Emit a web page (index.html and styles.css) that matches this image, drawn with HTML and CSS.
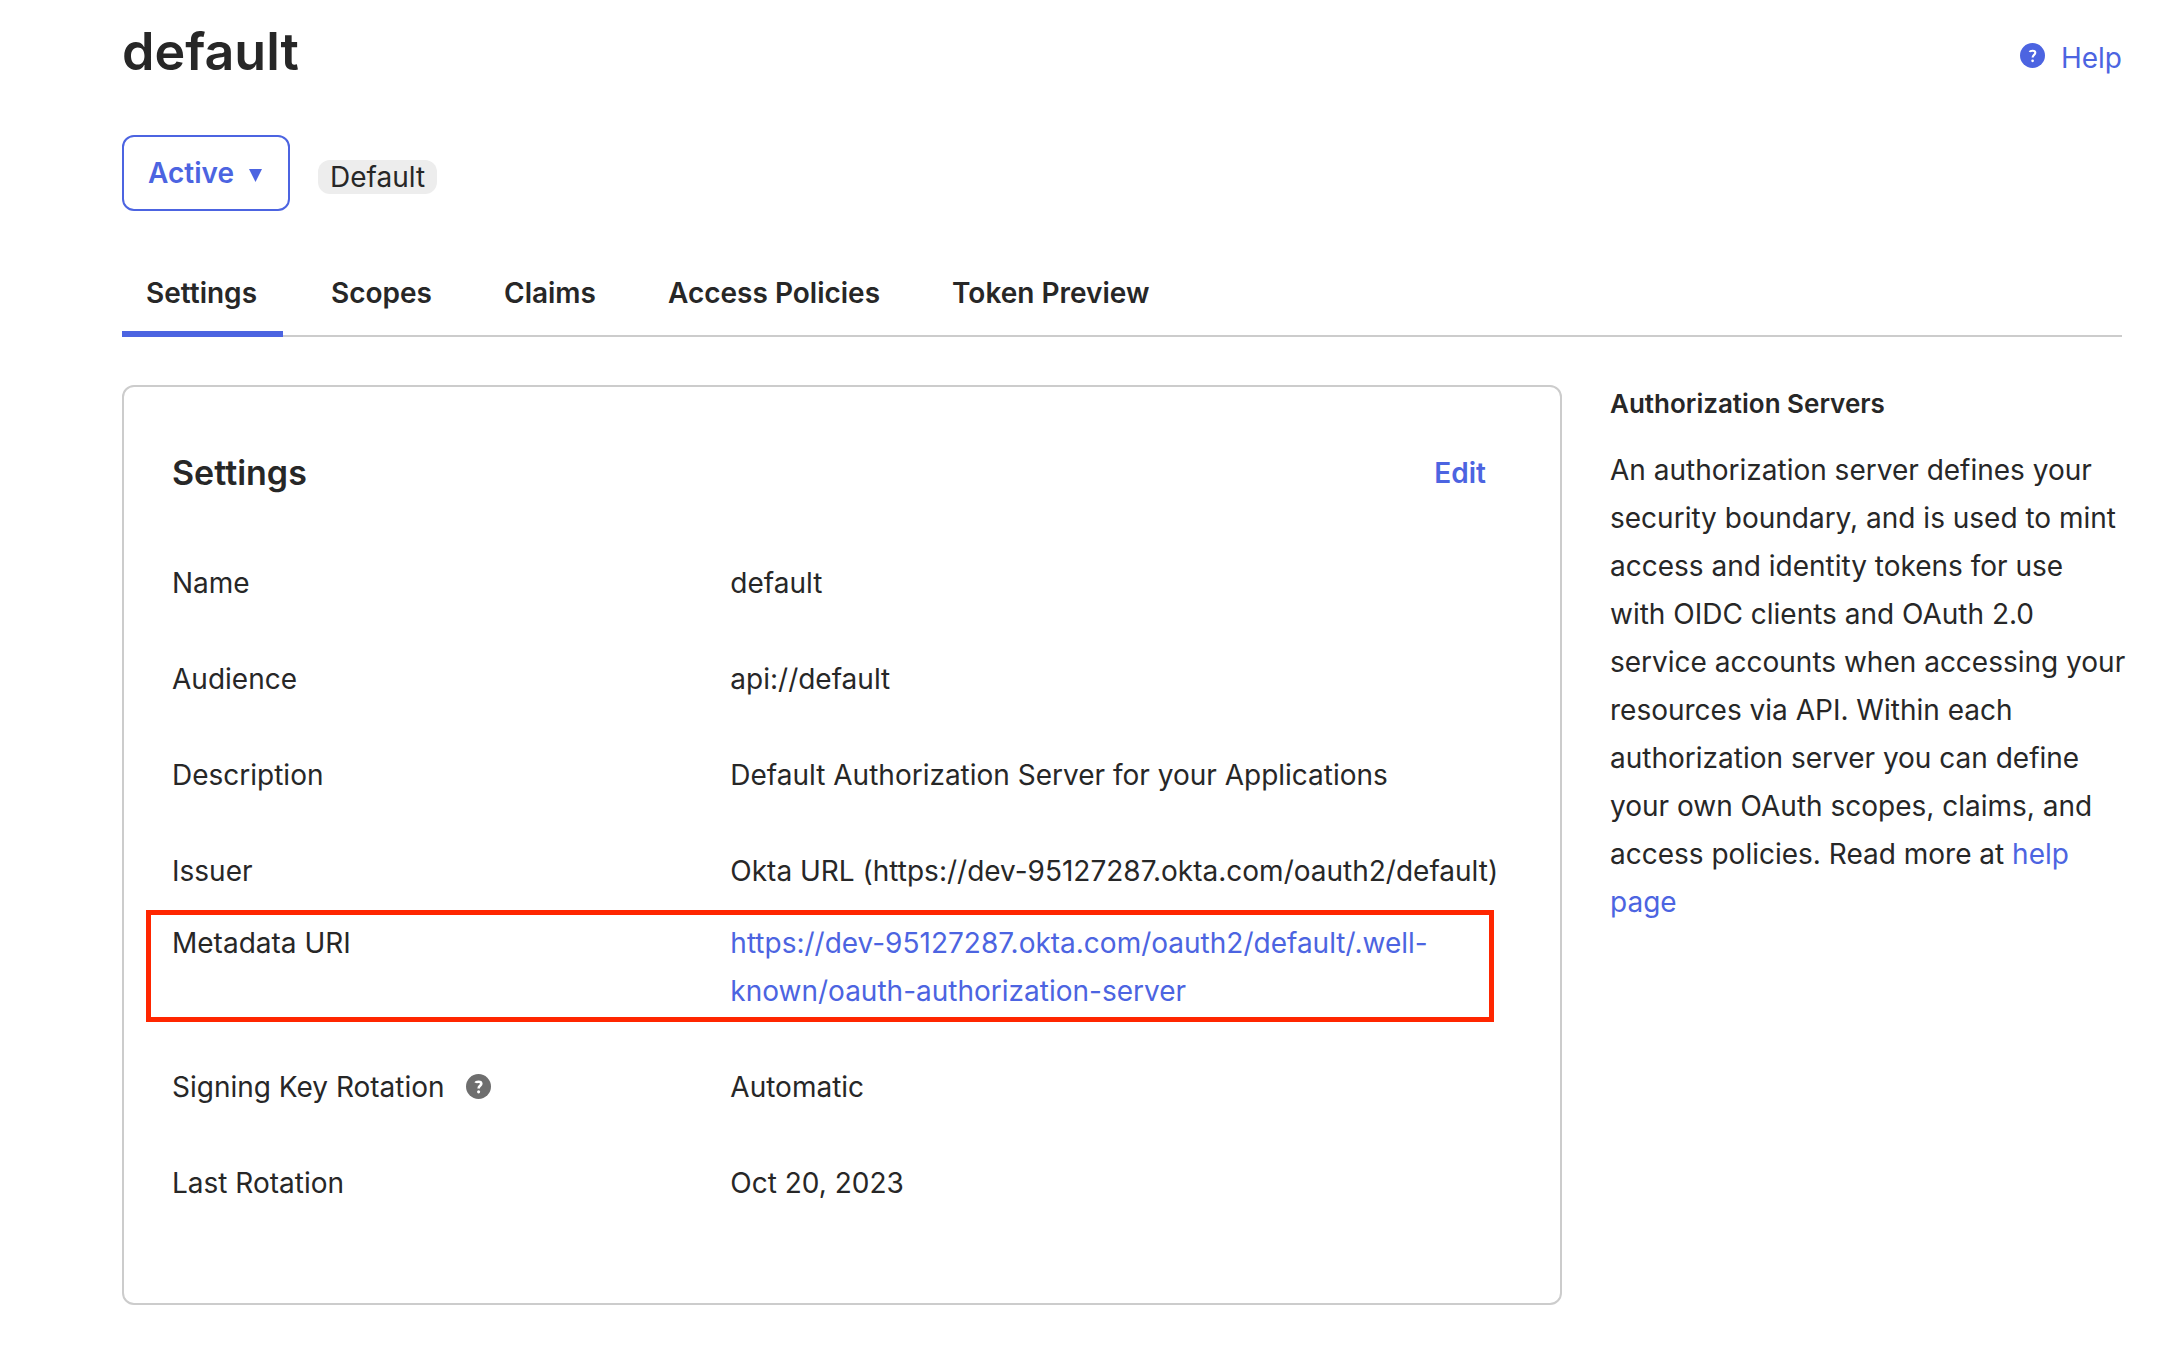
FILE: index.html
```html
<!DOCTYPE html>
<html lang="en">
<head>
  <meta charset="utf-8">
  <title>default</title>
  <link rel="stylesheet" href="styles.css">
</head>
<body>
  <div class="page">
    <header class="page-header">
      <h1 class="page-title">default</h1>
      <a class="help-link" href="#">
        <svg class="help-icon" viewBox="0 0 24 24" aria-hidden="true">
          <circle cx="12" cy="12" r="12" fill="currentColor"/>
          <path d="M9.3 8.6C9.7 7.2 14.7 6.5 14.7 9.4C14.7 11.4 12.1 11.4 12.1 13.9" fill="none" stroke="#fff" stroke-width="2"/>
          <circle cx="12.1" cy="17.1" r="1.3" fill="#fff"/>
        </svg>
        <span>Help</span>
      </a>
    </header>

    <div class="status">
      <button class="status-button" type="button">Active
        <svg class="caret" viewBox="0 0 13 13" aria-hidden="true"><path d="M0 0H13L6.5 13Z" fill="currentColor"/></svg>
      </button>
      <span class="badge">Default</span>
    </div>

    <nav class="tabs">
      <a class="tab tab-active" href="#">Settings</a>
      <a class="tab" href="#">Scopes</a>
      <a class="tab" href="#">Claims</a>
      <a class="tab" href="#">Access Policies</a>
      <a class="tab" href="#">Token Preview</a>
    </nav>

    <div class="content">
      <main class="card">
        <div class="card-header">
          <h2 class="card-title">Settings</h2>
          <a class="edit-link" href="#">Edit</a>
        </div>
        <dl class="settings">
          <div class="row"><dt>Name</dt><dd>default</dd></div>
          <div class="row"><dt>Audience</dt><dd>api://default</dd></div>
          <div class="row"><dt>Description</dt><dd>Default Authorization Server for your Applications</dd></div>
          <div class="row row-tight"><dt>Issuer</dt><dd>Okta URL (https://dev-95127287.okta.com/oauth2/default)</dd></div>
          <div class="row row-highlight"><dt>Metadata URI</dt><dd><a href="#">https://dev-95127287.okta.com/oauth2/default/.well-known/oauth-authorization-server</a></dd></div>
          <div class="row">
            <dt class="with-icon">Signing Key Rotation
              <svg class="help-icon hint-icon" viewBox="0 0 24 24" aria-hidden="true">
                <circle cx="12" cy="12" r="12" fill="currentColor"/>
                <path d="M9.3 8.6C9.7 7.2 14.7 6.5 14.7 9.4C14.7 11.4 12.1 11.4 12.1 13.9" fill="none" stroke="#fff" stroke-width="2.5"/>
                <circle cx="12.1" cy="17.1" r="1.5" fill="#fff"/>
              </svg>
            </dt>
            <dd>Automatic</dd>
          </div>
          <div class="row"><dt>Last Rotation</dt><dd>Oct 20, 2023</dd></div>
        </dl>
      </main>

      <aside class="sidebar">
        <h3 class="sidebar-title">Authorization Servers</h3>
        <p class="sidebar-text">An authorization server defines your security boundary, and is used to mint access and identity tokens for use with&nbsp;OIDC clients and OAuth 2.0 service accounts when accessing your resources via API. Within each authorization server you can define your own OAuth scopes, claims, and access policies. Read more at <a href="#">help page</a></p>
      </aside>
    </div>
  </div>
</body>
</html>
```

FILE: styles.css
```css
* {
  box-sizing: border-box;
}

body {
  margin: 0;
  background: #fff;
  color: #272727;
  font-family: Inter, "Liberation Sans", sans-serif;
  font-size: 28px;
  line-height: 48px;
}

h1, h2, h3, p, dl, dd {
  margin: 0;
}

a {
  color: #4c64e1;
  text-decoration: none;
}

.page {
  padding: 16px 42px 46px 122px;
}

.page-header {
  display: flex;
  justify-content: space-between;
  align-items: flex-start;
}

.page-title {
  font-size: 52px;
  font-weight: 600;
  line-height: 71px;
}

.help-link {
  display: flex;
  align-items: center;
  gap: 16px;
  padding-top: 18px;
}

.help-icon {
  display: block;
  width: 25px;
  height: 25px;
  margin-bottom: 5px;
}

.hint-icon {
  margin-bottom: 1px;
  color: #6e6e6e;
}

.status {
  display: flex;
  align-items: center;
  gap: 28px;
  margin-top: 48px;
}

.status-button {
  display: flex;
  align-items: center;
  gap: 15px;
  height: 76px;
  padding: 0 26px 0 24px;
  border: 2px solid #4c64e1;
  border-radius: 12px;
  background: #fff;
  color: #4c64e1;
  font: inherit;
  font-weight: 600;
}

.caret {
  width: 13px;
  height: 13px;
  margin-top: 4px;
}

.badge {
  margin-top: 8px;
  padding: 0 12px;
  border-radius: 12px;
  background: #ededed;
  line-height: 34px;
}

.tabs {
  display: flex;
  gap: 24px;
  margin-top: 48px;
  box-shadow: inset 0 -2px #ccc;
}

.tab {
  padding: 10px 24px 14px;
  border-bottom: 6px solid transparent;
  color: #272727;
  font-weight: 600;
}

.tab-active {
  padding-right: 26px;
  border-color: #4c64e1;
}

.content {
  display: grid;
  grid-template-columns: 72fr 28fr;
  align-items: start;
  margin-top: 48px;
}

.card {
  padding: 62px 48px 96px;
  border: 2px solid #ccc;
  border-radius: 12px;
}

.card-header {
  display: flex;
  justify-content: space-between;
  padding-right: 26px;
}

.card-title {
  font-size: 34px;
  font-weight: 600;
}

.edit-link {
  font-weight: 600;
}

.settings {
  margin-top: 62px;
}

.row {
  position: relative;
  display: grid;
  grid-template-columns: 5fr 7fr;
  margin-bottom: 48px;
}

.row:last-child {
  margin-bottom: 0;
}

.row-tight {
  margin-bottom: 24px;
}

.row-highlight dd {
  padding-right: 24px;
}

.row-highlight::after {
  content: "";
  position: absolute;
  inset: -9px 18px -7px -26px;
  border: 5px solid #ff2600;
  pointer-events: none;
}

.with-icon {
  display: flex;
  align-items: center;
  gap: 21px;
}

.sidebar {
  padding-left: 48px;
}

.sidebar-title {
  font-size: 26px;
  font-weight: 600;
  line-height: 38px;
}

.sidebar-text {
  margin-top: 23px;
  margin-right: -8px;
}
```
